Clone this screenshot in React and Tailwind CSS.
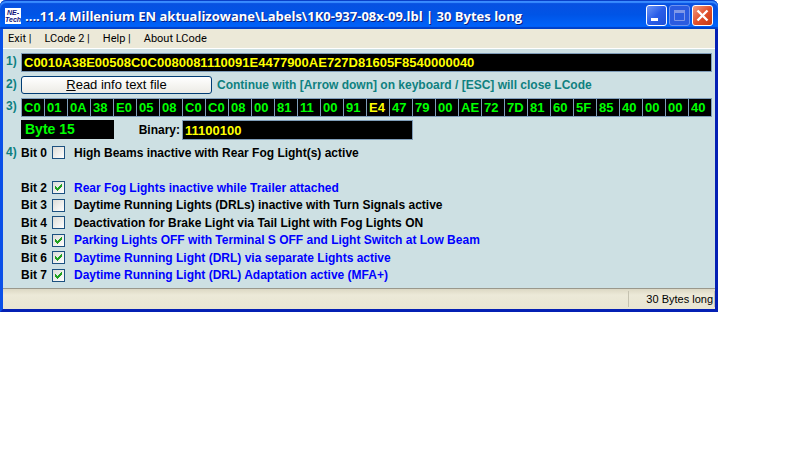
const HEX = 'C0010A38E00508C0C0080081110091E4477900AE727D81605F8540000040';
const BYTES = HEX.match(/../g);
const ACTIVE_BYTE = 15;

const MENU = ['Exit |', 'LCode 2 |', 'Help |', 'About LCode'];

const BITS = [
  { bit: 0, label: 'High Beams inactive with Rear Fog Light(s) active', on: false },
  { bit: 1, label: '' },
  { bit: 2, label: 'Rear Fog Lights inactive while Trailer attached', on: true },
  { bit: 3, label: 'Daytime Running Lights (DRLs) inactive with Turn Signals active', on: false },
  { bit: 4, label: 'Deactivation for Brake Light via Tail Light with Fog Lights ON', on: false },
  { bit: 5, label: 'Parking Lights OFF with Terminal S OFF and Light Switch at Low Beam', on: true },
  { bit: 6, label: 'Daytime Running Light (DRL) via separate Lights active', on: true },
  { bit: 7, label: 'Daytime Running Light (DRL) Adaptation active (MFA+)', on: true },
];

function TitleBar() {
  return (
    <header className="flex h-[29px] items-center gap-1 rounded-t-md bg-linear-to-b from-[#0a4fe0] via-[#0054e6] to-[#0066ff] pt-[2px] pr-[5px] pl-[5px] shadow-[inset_0_1px_0_#0a3fc8,inset_0_3px_1px_#3a8cff,inset_0_-2px_1px_#0040c8]">
      <div className="flex h-4 w-4 shrink-0 flex-col items-center justify-center overflow-hidden bg-white font-['Liberation_Sans',sans-serif] text-[7px] leading-[7px] font-bold text-[#10107a] italic">
        <span>NE-</span>
        <span>Tech</span>
      </div>
      <h1 className="flex-1 truncate font-['Open_Sans','Noto_Sans',sans-serif] text-[13px] leading-5 font-bold text-white [text-shadow:1px_1px_0_#0a1e80]">
        ....11.4 Millenium EN aktualizowane\Labels\1K0-937-08x-09.lbl | 30 Bytes long
      </h1>
      <div className="flex gap-[2px]">
        <button aria-label="Minimize" className="h-[21px] w-[21px] rounded-[3px] border border-white bg-linear-to-br from-[#6d94f5] via-[#2a5de8] to-[#1f50d8]">
          <svg viewBox="0 0 19 19" className="block h-[19px] w-[19px]">
            <rect x="4" y="12" width="7" height="3" fill="#fff" />
          </svg>
        </button>
        <button aria-label="Maximize" disabled className="h-[21px] w-[21px] rounded-[3px] border border-[#6f93ee] bg-[#2b5be0]">
          <svg viewBox="0 0 19 19" className="block h-[19px] w-[19px]">
            <path d="M4.500 5v9.500h10V5" fill="none" stroke="#8098e8" />
            <rect x="4" y="4" width="11" height="3" fill="#8098e8" />
          </svg>
        </button>
        <button aria-label="Close" className="h-[21px] w-[21px] rounded-[3px] border border-white bg-linear-to-br from-[#f09a80] via-[#e2502c] to-[#c83a10]">
          <svg viewBox="0 0 19 19" className="block h-[19px] w-[19px]">
            <path d="M4.500 4.500l10 10M14.500 4.500l-10 10" stroke="#fff" strokeWidth="2.4" />
          </svg>
        </button>
      </div>
    </header>
  );
}

function MenuBar() {
  return (
    <nav className="flex h-5 items-center gap-[13px] border-b border-white bg-[#ece9d8] pl-[5px] font-['Roboto',sans-serif] text-[11px] leading-4">
      {MENU.map((item) => (
        <button key={item}>{item}</button>
      ))}
    </nav>
  );
}

function Step({ n, className = '', children }) {
  return (
    <div className={`flex ${className}`}>
      <span className="w-[15px] shrink-0 leading-4 text-[#0f8080]">{n}</span>
      {children}
    </div>
  );
}

function BitRow({ bit, label, on }) {
  if (!label) return <div />;
  return (
    <label className="flex items-center">
      <span className="w-[31px] leading-4">Bit {bit}</span>
      <input type="checkbox" defaultChecked={on} className="sr-only" />
      <span className="h-[13px] w-[13px] shrink-0 border border-[#1c5180] bg-linear-to-br from-[#dcdcd7] to-white">
        {on && (
          <svg viewBox="0 0 11 11" shapeRendering="crispEdges" className="block h-[11px] w-[11px]">
            <path d="M2 4h1v1h1v1h1V5h1V4h1V3h1V2h1v3H8v1H7v1H6v1H5v1H4V8H3V7H2z" fill="#21a121" />
          </svg>
        )}
      </span>
      <span className={`ml-[9px] leading-4 ${on ? 'text-[#0000ff]' : 'text-black'}`}>{label}</span>
    </label>
  );
}

export default function App() {
  return (
    <div className="min-h-screen bg-white">
      <main className="w-full max-w-[718px] rounded-t-lg bg-[#0831d9] font-['Liberation_Sans',Arial,sans-serif] text-[12px] text-black">
        <TitleBar />
        <div className="border-x-3 border-b-3 border-r-[#0420b4] border-b-[#0420b4] border-l-[#0a50e8]">
          <MenuBar />
          <section className="bg-[#cde0e3] pt-1 pr-[3px] pb-1 pl-[3px] font-bold">
            <Step n="1)" className="h-[23px]">
              <input
                aria-label="Long coding"
                readOnly
                value={HEX}
                className="h-[19px] min-w-0 flex-1 border border-[#7f9db9] bg-black pl-[2px] text-[13px] text-[#ffff00]"
              />
            </Step>
            <Step n="2)" className="h-[22px]">
              <button className="h-[18px] w-[191px] rounded-[3px] border border-[#003c74] bg-linear-to-b from-white to-[#ecebe5] text-[13px] leading-4 font-normal">
                <u>R</u>ead info text file
              </button>
              <span className="ml-[5px] leading-[18px] text-[#0f8080]">
                Continue with [Arrow down] on keyboard / [ESC] will close LCode
              </span>
            </Step>
            <Step n="3)" className="h-[22px]">
              <div className="grid h-[19px] min-w-0 flex-1 grid-cols-[repeat(30,minmax(0,1fr))] border-y border-r border-[#7f9db9] bg-black">
                {BYTES.map((byte, i) => (
                  <input
                    key={i}
                    aria-label={`Byte ${i}`}
                    readOnly
                    value={byte}
                    className={`h-[17px] min-w-0 border-l border-[#7f9db9] pl-[2px] text-[13px] ${i === ACTIVE_BYTE ? 'text-[#ffff00]' : 'text-[#00ff00]'}`}
                  />
                ))}
              </div>
            </Step>
            <div className="flex h-6 pl-[15px]">
              <output className="h-[19px] w-[93px] bg-black pl-1 text-[14px] leading-[18px] text-[#00ff00]">
                Byte {ACTIVE_BYTE}
              </output>
              <label htmlFor="binary" className="w-[68px] pr-[2px] text-right leading-5">
                Binary:
              </label>
              <input
                id="binary"
                readOnly
                value="11100100"
                className="h-5 w-[231px] border border-[#7f9db9] bg-black pl-[2px] text-[13px] text-[#ffff00]"
              />
            </div>
            <Step n="4)">
              <div className="grid h-[140px] flex-1 grid-rows-8">
                {BITS.map((b) => (
                  <BitRow key={b.bit} {...b} />
                ))}
              </div>
            </Step>
          </section>
          <footer className="flex h-[21px] border-t border-[#9a988c] bg-linear-to-b from-[#dcd8c4] via-[#ece9d8] via-30% to-[#e8e5d2] text-[11px]">
            <div className="flex-1" />
            <div className="my-[2px] w-[87px] border-x border-[#c5c2b0] pr-px text-right leading-4">30 Bytes long</div>
          </footer>
        </div>
      </main>
    </div>
  );
}
